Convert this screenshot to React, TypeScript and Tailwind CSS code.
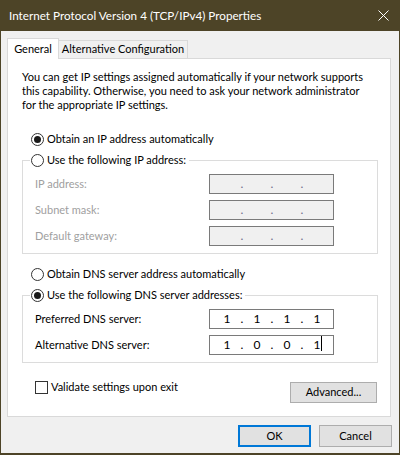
import React from "react";

function Radio({ checked }: { checked?: boolean }) {
  return (
    <svg width="13" height="13" viewBox="0 0 13 13" className="shrink-0">
      <circle cx="6.5" cy="6.5" r="6" fill="white" stroke="#333333" strokeWidth="1" />
      {checked && <circle cx="6.5" cy="6.5" r="3.5" fill="#1a1a1a" />}
    </svg>
  );
}

function IpBox({ values, disabled, caret }: { values?: string[]; disabled?: boolean; caret?: boolean }) {
  const segs = values ?? ["", "", "", ""];
  return (
    <div
      className={
        disabled
          ? "w-[125px] h-[20px] border border-[#7a7a7a] bg-[#f0f0f0] flex items-center pl-[4px]"
          : "w-[125px] h-[20px] border border-[#7a7a7a] bg-white flex items-center pl-[4px]"
      }
    >
      {segs.map((v, i) => (
        <React.Fragment key={i}>
          <span className="w-[26px] text-center leading-[18px] text-[12px]">
            <span className="relative">
              {v}
              {caret && i === 3 && (
                <span className="absolute left-full top-[-1px] ml-[1px] w-px h-[15px] bg-black" />
              )}
            </span>
          </span>
          {i < 3 && (
            <span
              className={
                disabled
                  ? "w-[4px] text-center leading-[18px] text-[12px] text-[#6d6d8a]"
                  : "w-[4px] text-center leading-[18px] text-[12px] text-black"
              }
            >
              .
            </span>
          )}
        </React.Fragment>
      ))}
    </div>
  );
}

function Row({ label, disabled, children }: { label: string; disabled?: boolean; children: React.ReactNode }) {
  return (
    <div className="flex items-center h-[20px]">
      <span className={disabled ? "w-[174px] text-[#a0a0a0]" : "w-[174px] text-black"}>{label}</span>
      {children}
    </div>
  );
}

export default function App() {
  return (
    <div className="w-[400px] h-[455px] flex flex-col bg-[#f0f0f0] border-x border-b-2 border-[#4d4427] font-['Lato',sans-serif] text-[11px] text-black overflow-hidden">
      {/* Title bar */}
      <div className="h-[31px] shrink-0 bg-[#4d4427] flex items-center justify-between pl-[8px] pr-[10px] text-white">
        <span className="whitespace-nowrap text-[11.7px]">Internet Protocol Version 4 (TCP/IPv4) Properties</span>
        <svg width="11" height="11" viewBox="0 0 11 11">
          <path d="M0.5 0.5 L10.5 10.5 M10.5 0.5 L0.5 10.5" stroke="white" strokeWidth="1" />
        </svg>
      </div>

      {/* Tabs */}
      <div className="mt-[7px] pl-[6px] flex items-end">
        <div className="relative z-10 -mb-px w-[52px] h-[21px] bg-white border-x border-t border-[#d9d9d9] flex items-center justify-center">
          General
        </div>
        <div className="-ml-px w-[130px] h-[18px] bg-[#f0f0f0] border-x border-t border-[#d9d9d9] flex items-center justify-center whitespace-nowrap">
          Alternative Configuration
        </div>
      </div>

      {/* Panel */}
      <div className="ml-[6px] w-[384px] h-[359px] shrink-0 border border-[#d9d9d9] bg-white pl-[14px] pr-[12px] flex flex-col">
        <p className="mt-[11px] leading-[14px] whitespace-nowrap">
          You can get IP settings assigned automatically if your network supports
          <br />
          this capability. Otherwise, you need to ask your network administrator
          <br />
          for the appropriate IP settings.
        </p>

        <div className="mt-[19px] ml-[9px] h-[16px] flex items-center gap-[3px]">
          <Radio checked />
          <span>Obtain an IP address automatically</span>
        </div>

        <fieldset className="mt-[5px] w-[356px] border border-[#dcdcdc]">
          <legend className="ml-[7px] pl-[1px] pr-[3px] h-[16px] flex items-center gap-[3px]">
            <Radio />
            <span>Use the following IP address:</span>
          </legend>
          <div className="pl-[12px] pt-[6px] pb-[7px] flex flex-col gap-[6px]">
            <Row label="IP address:" disabled>
              <IpBox disabled />
            </Row>
            <Row label="Subnet mask:" disabled>
              <IpBox disabled />
            </Row>
            <Row label="Default gateway:" disabled>
              <IpBox disabled />
            </Row>
          </div>
        </fieldset>

        <div className="mt-[12px] ml-[9px] h-[16px] flex items-center gap-[3px]">
          <Radio />
          <span>Obtain DNS server address automatically</span>
        </div>

        <fieldset className="mt-[5px] w-[356px] border border-[#dcdcdc]">
          <legend className="ml-[7px] pl-[1px] pr-[3px] h-[16px] flex items-center gap-[3px]">
            <Radio checked />
            <span>Use the following DNS server addresses:</span>
          </legend>
          <div className="pl-[12px] pt-[6px] pb-[7px] flex flex-col gap-[6px]">
            <Row label="Preferred DNS server:">
              <IpBox values={["1", "1", "1", "1"]} />
            </Row>
            <Row label="Alternative DNS server:">
              <IpBox values={["1", "0", "0", "1"]} caret />
            </Row>
          </div>
        </fieldset>

        <div className="mt-[18px] flex justify-between items-start">
          <div className="ml-[13px] h-[13px] flex items-center gap-[3px]">
            <span className="w-[13px] h-[13px] border border-[#333333] bg-white shrink-0" />
            <span className="whitespace-nowrap">Validate settings upon exit</span>
          </div>
          <button className="mt-px mr-px w-[87px] h-[21px] bg-[#e1e1e1] border border-[#adadad] flex items-center justify-center">
            Advanced...
          </button>
        </div>
      </div>

      {/* Bottom buttons */}
      <div className="mt-[8px] pr-[7px] flex justify-end gap-[8px]">
        <button className="w-[73px] h-[22px] bg-[#e1e1e1] border-2 border-[#0078d7] flex items-center justify-center">
          OK
        </button>
        <button className="w-[73px] h-[22px] bg-[#e1e1e1] border border-[#adadad] flex items-center justify-center">
          Cancel
        </button>
      </div>
    </div>
  );
}
